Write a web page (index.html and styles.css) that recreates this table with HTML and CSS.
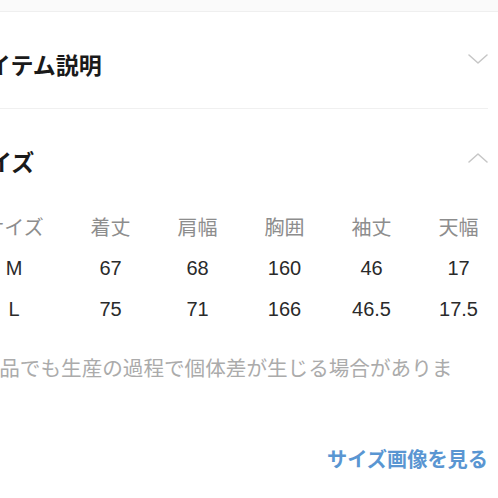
FILE: index.html
```html
<!DOCTYPE html>
<html lang="ja">
<head>
<meta charset="utf-8">
<link rel="stylesheet" href="styles.css">
</head>
<body>
<div class="topbar"></div>
<div class="content">
  <section class="acc acc-closed">
    <div class="acc-head">
      <h2 class="acc-title">アイテム説明</h2>
      <svg class="chev" width="20" height="10" viewBox="0 0 20 10"><path d="M1 1 L10 9 L19 1" fill="none" stroke="#c6c6c6" stroke-width="1.5" stroke-linecap="round" stroke-linejoin="round"/></svg>
    </div>
  </section>
  <section class="acc acc-open">
    <div class="acc-head">
      <h2 class="acc-title">サイズ</h2>
      <svg class="chev chev-up" width="20" height="10" viewBox="0 0 20 10"><path d="M1 9 L10 1 L19 9" fill="none" stroke="#c6c6c6" stroke-width="1.5" stroke-linecap="round" stroke-linejoin="round"/></svg>
    </div>
    <div class="size-table">
      <div class="th">サイズ</div><div class="th">着丈</div><div class="th">肩幅</div><div class="th">胸囲</div><div class="th">袖丈</div><div class="th">天幅</div>
      <div class="td">M</div><div class="td">67</div><div class="td">68</div><div class="td">160</div><div class="td">46</div><div class="td">17</div>
      <div class="td">L</div><div class="td">75</div><div class="td">71</div><div class="td">166</div><div class="td">46.5</div><div class="td">17.5</div>
    </div>
    <p class="note">同じ商品でも生産の過程で個体差が生じる場合があります。</p>
    <div class="link-row"><a class="link" href="#">サイズ画像を見る</a></div>
  </section>
</div>
</body>
</html>
```

FILE: styles.css
```css
html, body {
  margin: 0;
  padding: 0;
  background: #fff;
  overflow: hidden;
  width: 498px;
  height: 498px;
}
body {
  font-family: "Noto Sans CJK JP", "Noto Sans", sans-serif;
  color: #1c1c1c;
}
.topbar {
  height: 11px;
  background: #fafafa;
  border-bottom: 1px solid #efefef;
}
.content {
  margin-left: -34px;
  padding-right: 10px;
}
.acc-head {
  display: flex;
  justify-content: space-between;
  align-items: flex-start;
}
.acc-closed .acc-head {
  height: 96px;
  border-bottom: 1px solid #f0f0f0;
}
.acc-open .acc-head {
  height: 97px;
}
.acc-title {
  margin: 41px 0 0 0;
  font-size: 23px;
  line-height: 23px;
  font-weight: 700;
  color: #1a1a1a;
}
.chev {
  display: block;
  margin-top: 42px;
}
.chev-up {
  margin-top: 44px;
}
.size-table {
  display: grid;
  grid-template-columns: 106px repeat(5, 87px);
  grid-auto-rows: 41px;
  margin-left: -5px;
  align-items: center;
  justify-items: center;
}
.th {
  font-size: 20px;
  line-height: 20px;
  color: #8d8d8d;
}
.td {
  font-family: "Liberation Sans", "Noto Sans", sans-serif;
  font-size: 20px;
  line-height: 20px;
  color: #2a2a2a;
}
.note {
  margin: 18px 0 0 -28.5px;
  width: 518px;
  font-size: 20.6px;
  line-height: 41px;
  color: #ababab;
}
.link-row {
  display: flex;
  justify-content: flex-end;
  margin-top: 20px;
}
.link {
  font-size: 20.2px;
  line-height: 20px;
  font-weight: 700;
  color: #5a96d2;
  text-decoration: none;
}
```
